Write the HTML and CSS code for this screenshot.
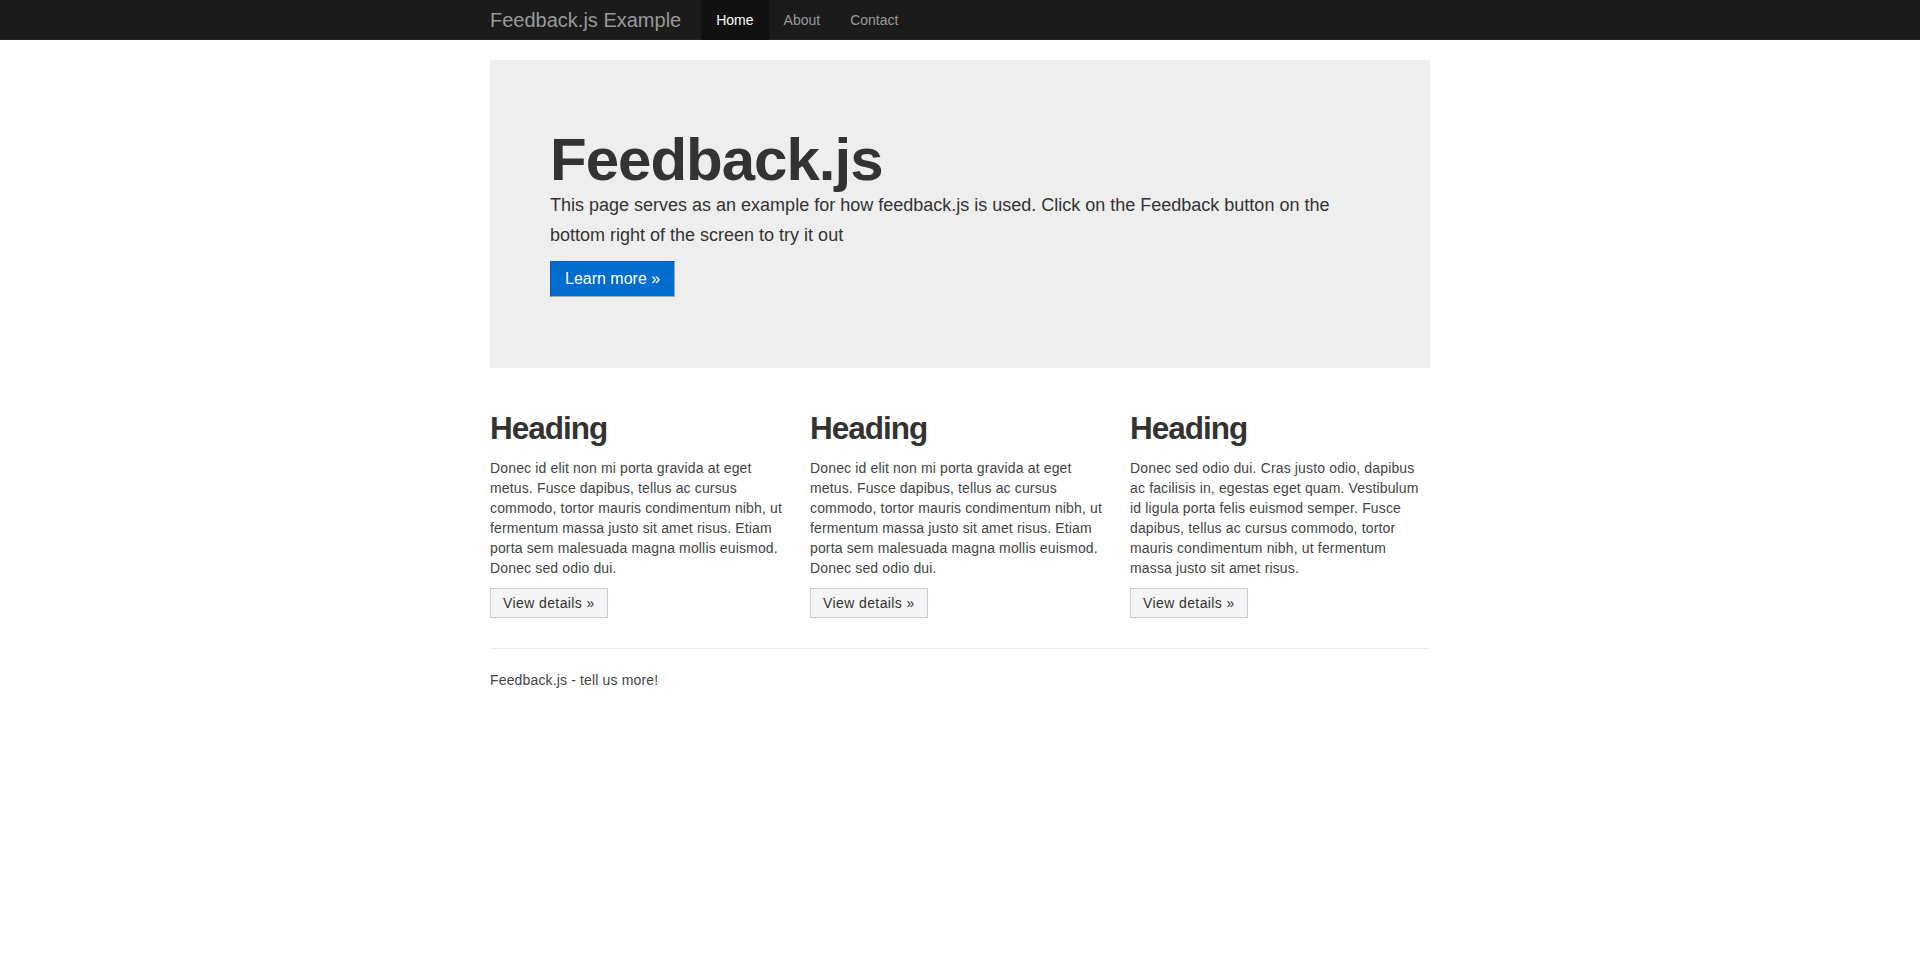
FILE: index.html
```html
<!DOCTYPE html>
<html lang="en">
<head>
<meta charset="utf-8">
<title>Feedback.js Example</title>
<link rel="stylesheet" href="styles.css">
</head>
<body>
<div class="navbar">
  <div class="container nav-inner">
    <a class="brand" href="#">Feedback.js Example</a>
    <ul class="nav">
      <li class="active"><a href="#">Home</a></li>
      <li><a href="#">About</a></li>
      <li><a href="#">Contact</a></li>
    </ul>
  </div>
</div>

<div class="container main">
  <div class="hero-unit">
    <h1>Feedback.js</h1>
    <p>This page serves as an example for how feedback.js is used. Click on the Feedback button on the bottom right of the screen to try it out</p>
    <p class="hero-actions"><a class="btn-primary" href="#">Learn more &raquo;</a></p>
  </div>

  <div class="row">
    <div class="span4">
      <h2>Heading</h2>
      <p>Donec id elit non mi porta gravida at eget metus. Fusce dapibus, tellus ac cursus commodo, tortor mauris condimentum nibh, ut fermentum massa justo sit amet risus. Etiam porta sem malesuada magna mollis euismod. Donec sed odio dui.</p>
      <p class="actions"><a class="btn" href="#">View details &raquo;</a></p>
    </div>
    <div class="span4">
      <h2>Heading</h2>
      <p>Donec id elit non mi porta gravida at eget metus. Fusce dapibus, tellus ac cursus commodo, tortor mauris condimentum nibh, ut fermentum massa justo sit amet risus. Etiam porta sem malesuada magna mollis euismod. Donec sed odio dui.</p>
      <p class="actions"><a class="btn" href="#">View details &raquo;</a></p>
    </div>
    <div class="span4">
      <h2>Heading</h2>
      <p>Donec sed odio dui. Cras justo odio, dapibus ac facilisis in, egestas eget quam. Vestibulum id ligula porta felis euismod semper. Fusce dapibus, tellus ac cursus commodo, tortor mauris condimentum nibh, ut fermentum massa justo sit amet risus.</p>
      <p class="actions"><a class="btn" href="#">View details &raquo;</a></p>
    </div>
  </div>

  <hr class="divider">

  <footer class="footer">
    <p>Feedback.js - tell us more!</p>
  </footer>
</div>
</body>
</html>
```

FILE: styles.css
```css
* { box-sizing: border-box; }

html, body {
  margin: 0;
  padding: 0;
}

body {
  font-family: "Liberation Sans", Arial, Helvetica, sans-serif;
  font-size: 14px;
  line-height: 20px;
  color: #444;
  background: #fff;
}

a { text-decoration: none; }

.container {
  width: 940px;
  margin: 0 auto;
}

/* Navbar */
.navbar {
  height: 40px;
  background: #1b1b1b;
  border-bottom: 1px solid #252525;
}

.nav-inner {
  display: flex;
  align-items: stretch;
  height: 39px;
}

.brand {
  display: block;
  padding: 10px 20px 9px 0;
  font-size: 20px;
  line-height: 20px;
  color: #999;
}

.nav {
  display: flex;
  list-style: none;
  margin: 0;
  padding: 0;
}

.nav a {
  display: block;
  padding: 10px 15px 10px;
  font-size: 14px;
  line-height: 20px;
  color: #999;
  height: 40px;
}

.nav .active a {
  background: #111;
  color: #fff;
}

/* Main */
.main {
  padding-top: 20px;
}

.hero-unit {
  background: #eee;
  padding: 60px;
  margin-bottom: 30px;
  font-size: 18px;
  line-height: 30px;
  color: #333;
}

.hero-unit h1 {
  margin: 10px 0 0;
  font-size: 60px;
  line-height: 60px;
  font-weight: bold;
  letter-spacing: -1px;
  color: #333;
}

.hero-unit p {
  margin: 0 0 10px;
}

.hero-unit .hero-actions {
  display: flex;
  margin: 0;
  padding: 1px 0 11px;
}

.btn-primary {
  display: block;
  height: 36px;
  padding: 7px 14px;
  font-size: 16px;
  line-height: 20px;
  color: #fff;
  background: #006dcc;
  border: 1px solid #0060b4;
  border-bottom-color: #9aa8b6;
  border-right-color: #9aa8b6;
}

.row {
  display: flex;
  gap: 20px;
}

.span4 {
  width: 300px;
  letter-spacing: 0.15px;
}

.span4 h2 {
  margin: 10px 0;
  font-size: 31.5px;
  line-height: 40px;
  font-weight: bold;
  letter-spacing: -1px;
  color: #333;
}

.span4 p {
  margin: 0 0 10px;
}

.span4 .actions {
  display: flex;
}

.btn {
  display: block;
  height: 30px;
  padding: 4px 12px;
  font-size: 14px;
  line-height: 20px;
  letter-spacing: 0.4px;
  color: #333;
  background: #f5f5f5;
  border: 1px solid #ccc;
}

.divider {
  margin: 20px 0;
  border: 0;
  border-top: 1px solid #eee;
  border-bottom: 1px solid #fff;
}

.footer p {
  margin: 0 0 10px;
  letter-spacing: 0.15px;
}
```
